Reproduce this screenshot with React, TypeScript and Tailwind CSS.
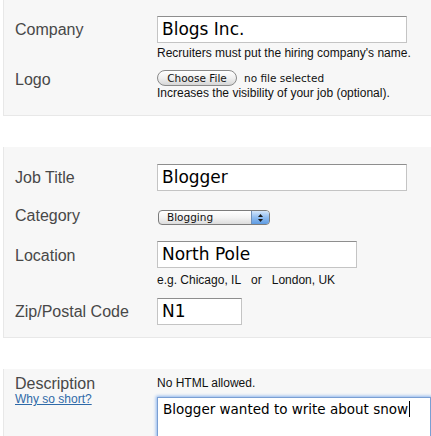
import React from 'react'

const LABEL =
  "w-[142px] shrink-0 text-[16px] leading-[20px] text-[#484848] font-['Liberation_Sans',Arial,sans-serif]"
const INPUT =
  "h-[27px] bg-white border border-[#c4c4c4] border-t-[#8e8e8e] pl-[4px] flex items-center text-[17px] text-black font-['DejaVu_Sans',Verdana,sans-serif]"
const HELP = "text-[12px] leading-[14px] text-[#111111]"

const Panel = ({ className, children }: { className: string; children: React.ReactNode }) => (
  <div
    className={`ml-[3px] bg-[#f7f7f7] border-l border-b border-[#e8e8e8] pl-[11px] ${className}`}
  >
    {children}
  </div>
)

const ChooseFile = () => (
  <div className="flex items-center h-[16px] font-['DejaVu_Sans',Verdana,sans-serif] text-[10.5px] text-[#111]">
    <div className="h-[16px] w-[80px] rounded-full border border-[#8a8a8a] bg-gradient-to-b from-white via-[#f0f0f0] to-[#d6d6d6] flex items-center justify-center leading-none">
      Choose File
    </div>
    <span className="ml-[7px] leading-none">no file selected</span>
  </div>
)

const CategorySelect = () => (
  <div className="ml-[1px] h-[15px] w-[112px] rounded-[4px] border border-[#7c7c7c] bg-gradient-to-b from-white via-[#f3f3f3] to-[#dcdcdc] flex overflow-hidden font-['DejaVu_Sans',Verdana,sans-serif] text-[10.5px] text-[#111]">
    <div className="flex-1 pl-[8px] flex items-center leading-none">Blogging</div>
    <div className="w-[18px] border-l border-[#6f8fb8] bg-gradient-to-b from-[#d4e6fb] via-[#8fbcf0] to-[#5d9be2] flex flex-col items-center justify-center gap-[2px]">
      <svg width="5" height="3" viewBox="0 0 5 3">
        <path d="M0 3 L2.5 0 L5 3 Z" fill="#1a1a1a" />
      </svg>
      <svg width="5" height="3" viewBox="0 0 5 3">
        <path d="M0 0 L2.5 3 L5 0 Z" fill="#1a1a1a" />
      </svg>
    </div>
  </div>
)

export default function App() {
  return (
    <div className="bg-white h-[436px] w-[431px] overflow-hidden font-['Liberation_Sans',Arial,sans-serif]">
      <Panel className="h-[116px] pt-[16px]">
        <div className="flex">
          <div className={`${LABEL} mt-[4px]`}>Company</div>
          <div>
            <div className={`${INPUT} w-[250px]`}>Blogs Inc.</div>
            <div className={`${HELP} mt-[3px]`}>Recruiters must put the hiring company's name.</div>
          </div>
        </div>
        <div className="flex mt-[10px]">
          <div className={LABEL}>Logo</div>
          <div>
            <ChooseFile />
            <div className={HELP}>Increases the visibility of your job (optional).</div>
          </div>
        </div>
      </Panel>

      <Panel className="mt-[31px] h-[191px] pt-[17px]">
        <div className="flex">
          <div className={`${LABEL} mt-[4px]`}>Job Title</div>
          <div className={`${INPUT} w-[250px] h-[26px]`}>Blogger</div>
        </div>
        <div className="flex mt-[19px]">
          <div className={`${LABEL} -mt-[4px]`}>Category</div>
          <CategorySelect />
        </div>
        <div className="flex mt-[15px]">
          <div className={`${LABEL} mt-[5px]`}>Location</div>
          <div>
            <div className={`${INPUT} w-[200px]`}>North Pole</div>
            <div className={`${HELP} mt-[5px]`}>
              e.g. Chicago, IL&nbsp;&nbsp; or &nbsp;&nbsp;London, UK
            </div>
          </div>
        </div>
        <div className="flex mt-[11px]">
          <div className={`${LABEL} mt-[4px]`}>Zip/Postal Code</div>
          <div className={`${INPUT} w-[85px]`}>N1</div>
        </div>
      </Panel>

      <Panel className="mt-[31px] h-[120px] pt-[7px]">
        <div className="flex">
          <div className="w-[142px] shrink-0">
            <div className="text-[16px] leading-[16px] text-[#484848]">Description</div>
            <a href="#" className="block text-[12px] leading-[14px] text-[#2f6aa8] underline">
              Why so short?
            </a>
          </div>
          <div className="flex-1">
            <div className={HELP}>No HTML allowed.</div>
            <div className="mt-[7px] h-[80px] bg-white border border-[#7a9fd3] shadow-[0_0_3px_1px_#8db6ee] pl-[5px] pt-[3px] text-[13.5px] leading-[17px] text-black font-['DejaVu_Sans',Verdana,sans-serif] flex items-start">
              <span>Blogger wanted to write about snow</span>
              <span className="inline-block w-[1px] h-[16px] bg-black ml-[1px]" />
            </div>
          </div>
        </div>
      </Panel>
    </div>
  )
}
